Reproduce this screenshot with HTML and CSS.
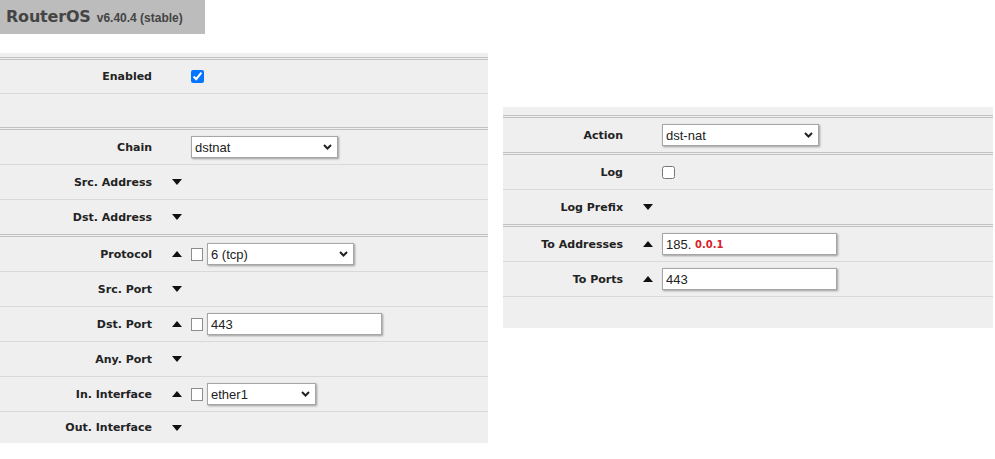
FILE: index.html
```html
<!DOCTYPE html>
<html lang="en">
<head>
  <meta charset="UTF-8">
  <meta name="viewport" content="width=device-width, initial-scale=1.0">
  <title>RouterOS - NAT rule</title>
  <link rel="stylesheet" href="styles.css">
</head>
<body>
  <div class="brand">
    <span class="name">RouterOS</span>
    <span class="ver">v6.40.4 (stable)</span>
  </div>

  <div class="panels">
    <div class="panel general">
      <div class="row grp short">
        <div class="label">Enabled</div>
        <div class="tog"></div>
        <div class="ctrl"><input type="checkbox" class="cb" checked></div>
      </div>
      <div class="row short"></div>

      <div class="row grp">
        <div class="label">Chain</div>
        <div class="tog"></div>
        <div class="ctrl">
          <div class="select w147"><span>dstnat</span><svg class="chev" width="9" height="6" viewBox="0 0 9 6"><polyline points="1,1 4.5,4.5 8,1"/></svg></div>
        </div>
      </div>
      <div class="row">
        <div class="label">Src. Address</div>
        <div class="tog"><svg width="10" height="6" viewBox="0 0 10 6"><polygon points="0,0 10,0 5,6"/></svg></div>
      </div>
      <div class="row">
        <div class="label">Dst. Address</div>
        <div class="tog"><svg width="10" height="6" viewBox="0 0 10 6"><polygon points="0,0 10,0 5,6"/></svg></div>
      </div>

      <div class="row grp">
        <div class="label">Protocol</div>
        <div class="tog"><svg width="10" height="6" viewBox="0 0 10 6"><polygon points="0,6 10,6 5,0"/></svg></div>
        <div class="ctrl">
          <input type="checkbox" class="not">
          <div class="select w147"><span>6 (tcp)</span><svg class="chev" width="9" height="6" viewBox="0 0 9 6"><polyline points="1,1 4.5,4.5 8,1"/></svg></div>
        </div>
      </div>
      <div class="row">
        <div class="label">Src. Port</div>
        <div class="tog"><svg width="10" height="6" viewBox="0 0 10 6"><polygon points="0,0 10,0 5,6"/></svg></div>
      </div>
      <div class="row">
        <div class="label">Dst. Port</div>
        <div class="tog"><svg width="10" height="6" viewBox="0 0 10 6"><polygon points="0,6 10,6 5,0"/></svg></div>
        <div class="ctrl">
          <input type="checkbox" class="not">
          <input type="text" class="text w175" value="443">
        </div>
      </div>
      <div class="row">
        <div class="label">Any. Port</div>
        <div class="tog"><svg width="10" height="6" viewBox="0 0 10 6"><polygon points="0,0 10,0 5,6"/></svg></div>
      </div>
      <div class="row">
        <div class="label">In. Interface</div>
        <div class="tog"><svg width="10" height="6" viewBox="0 0 10 6"><polygon points="0,6 10,6 5,0"/></svg></div>
        <div class="ctrl">
          <input type="checkbox" class="not">
          <div class="select w109"><span>ether1</span><svg class="chev" width="9" height="6" viewBox="0 0 9 6"><polyline points="1,1 4.5,4.5 8,1"/></svg></div>
        </div>
      </div>
      <div class="row last">
        <div class="label">Out. Interface</div>
        <div class="tog"><svg width="10" height="6" viewBox="0 0 10 6"><polygon points="0,0 10,0 5,6"/></svg></div>
      </div>
    </div>

    <div class="panel action">
      <div class="row grp">
        <div class="label">Action</div>
        <div class="tog"></div>
        <div class="ctrl">
          <div class="select w157"><span>dst-nat</span><svg class="chev" width="9" height="6" viewBox="0 0 9 6"><polyline points="1,1 4.5,4.5 8,1"/></svg></div>
        </div>
      </div>
      <div class="row grp">
        <div class="label">Log</div>
        <div class="tog"></div>
        <div class="ctrl"><input type="checkbox" class="cb"></div>
      </div>
      <div class="row">
        <div class="label">Log Prefix</div>
        <div class="tog"><svg width="10" height="6" viewBox="0 0 10 6"><polygon points="0,0 10,0 5,6"/></svg></div>
      </div>

      <div class="row grp">
        <div class="label">To Addresses</div>
        <div class="tog"><svg width="10" height="6" viewBox="0 0 10 6"><polygon points="0,6 10,6 5,0"/></svg></div>
        <div class="ctrl">
          <div class="masked">
            <input type="text" class="text w175" value="185.">
            <span class="mask">0.0.1</span>
          </div>
        </div>
      </div>
      <div class="row">
        <div class="label">To Ports</div>
        <div class="tog"><svg width="10" height="6" viewBox="0 0 10 6"><polygon points="0,6 10,6 5,0"/></svg></div>
        <div class="ctrl">
          <input type="text" class="text w175" value="443">
        </div>
      </div>
      <div class="row last"></div>
    </div>
  </div>
</body>
</html>
```

FILE: styles.css
```css
* {
  margin: 0;
  padding: 0;
  box-sizing: border-box;
}
body {
  background: #fff;
  font-family: 'DejaVu Sans', Verdana, sans-serif;
  color: #222;
}
.brand {
  width: 205px;
  height: 34px;
  background: #bcbcbc;
  color: #444;
  padding: 7px 0 0 6px;
  white-space: nowrap;
}
.brand .name {
  font-size: 16px;
  font-weight: bold;
  letter-spacing: -0.2px;
}
.brand .ver {
  font-family: 'Liberation Sans', Arial, sans-serif;
  font-size: 12px;
  font-weight: bold;
  margin-left: 1px;
}
.panels {
  display: flex;
  align-items: flex-start;
  gap: 15px;
  margin-top: 19px;
}
.panel {
  background: #efefef;
}
.panel.general {
  width: 488px;
  padding-top: 4px;
}
.panel.action {
  width: 490px;
  margin-top: 54px;
  padding-top: 8px;
}
.row {
  display: flex;
  align-items: center;
  height: 35px;
  border-top: 1px solid #d9d9d9;
}
.row.grp {
  height: 37px;
  border-top: 3px double #c2c2c2;
}
.row.short {
  height: 34px;
}
.row.grp.short {
  height: 36px;
}
.general .row.last {
  height: 32px;
}
.action .row.last {
  height: 32px;
}
.label {
  width: 152px;
  margin-right: 20px;
  text-align: right;
  font-size: 11px;
  font-weight: bold;
  white-space: nowrap;
}
.action .label {
  width: 120px;
}
.tog {
  width: 10px;
  height: 6px;
  margin-right: 9px;
  display: flex;
}
.tog svg {
  fill: #111;
}
.ctrl {
  display: flex;
  align-items: center;
  gap: 4px;
}
.cb {
  width: 13px;
  height: 13px;
  margin: 0;
}
.not {
  appearance: none;
  width: 12px;
  height: 13px;
  margin: 0;
  border: 1px solid #8c8c8c;
  background: #fff;
}
.select,
.text {
  height: 22px;
  background: #fff;
  border: 1px solid #a6a6a6;
  box-shadow: 1px 1px 2px rgba(0, 0, 0, 0.35);
  font-family: 'Liberation Sans', Arial, sans-serif;
  font-size: 13px;
  color: #222;
}
.select {
  display: flex;
  align-items: center;
  justify-content: space-between;
  padding: 0 5px 0 3px;
}
.chev {
  fill: none;
  stroke: #222;
  stroke-width: 2;
}
.text {
  padding: 0 3px;
  outline: none;
}
.w147 { width: 147px; }
.w109 { width: 109px; }
.w157 { width: 157px; }
.w175 { width: 175px; }
.masked {
  position: relative;
}
.mask {
  position: absolute;
  left: 33px;
  top: 6px;
  font-size: 10px;
  font-weight: bold;
  color: #d8232a;
}
```
